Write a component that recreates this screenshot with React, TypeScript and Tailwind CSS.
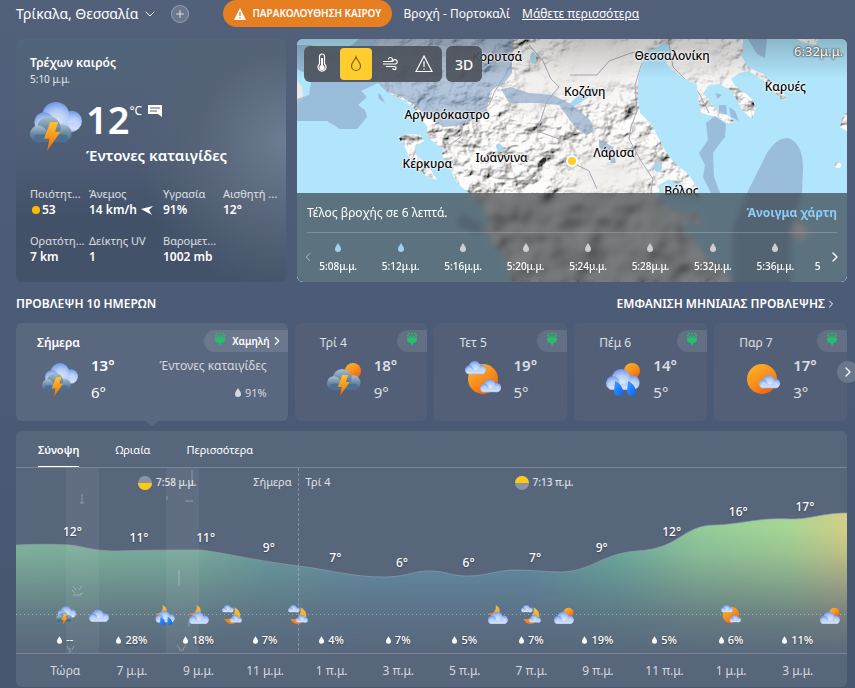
import React, { useState } from 'react';
import clsx from 'clsx';
import { ChevronDown, ChevronLeft, ChevronRight, Plus } from 'lucide-react';

type IconKind =
  | 'storm'
  | 'sunStorm'
  | 'sunClouds'
  | 'sunRain'
  | 'sunny'
  | 'cloud'
  | 'moonRain'
  | 'moonCloud'
  | 'moonClouds'
  | 'sunCloud';

const METRICS = [
  { label: 'Ποιότητ...', value: '53', dot: true },
  { label: 'Άνεμος', value: '14 km/h', arrow: true },
  { label: 'Υγρασία', value: '91%' },
  { label: 'Αισθητή ...', value: '12°' },
  { label: 'Ορατότη...', value: '7 km' },
  { label: 'Δείκτης UV', value: '1' },
  { label: 'Βαρομετ...', value: '1002 mb' },
];

const PLACES = [
  { name: 'Κορυτσά', x: 36.4, y: 7.4 },
  { name: 'Θεσσαλονίκη', x: 68.2, y: 7 },
  { name: 'Κοζάνη', x: 52.3, y: 21.8 },
  { name: 'Καρυές', x: 88.8, y: 19.8 },
  { name: 'Αργυρόκαστρο', x: 27.3, y: 31.3 },
  { name: 'Κέρκυρα', x: 23.7, y: 51.3 },
  { name: 'Ιωάννινα', x: 37.2, y: 49 },
  { name: 'Λάρισα', x: 57.6, y: 46.9 },
  { name: 'Βόλος', x: 69.9, y: 62.6 },
];

const MINUTES = ['5:08', '5:12', '5:16', '5:20', '5:24', '5:28', '5:32', '5:36'];

const DAYS: { name: string; icon: IconKind; high: number; low: number }[] = [
  { name: 'Τρί 4', icon: 'sunStorm', high: 18, low: 9 },
  { name: 'Τετ 5', icon: 'sunClouds', high: 19, low: 5 },
  { name: 'Πέμ 6', icon: 'sunRain', high: 14, low: 5 },
  { name: 'Παρ 7', icon: 'sunny', high: 17, low: 3 },
];

// top = distance of the temperature label from the top of the graph area
const HOURS = [
  { time: 'Τώρα', temp: 12, top: 25, rain: '--' },
  { time: '7 μ.μ.', temp: 11, top: 31, rain: '28%' },
  { time: '9 μ.μ.', temp: 11, top: 31, rain: '18%' },
  { time: '11 μ.μ.', temp: 9, top: 41, rain: '7%' },
  { time: '1 π.μ.', temp: 7, top: 51, rain: '4%' },
  { time: '3 π.μ.', temp: 6, top: 56, rain: '7%' },
  { time: '5 π.μ.', temp: 6, top: 56, rain: '5%' },
  { time: '7 π.μ.', temp: 7, top: 51, rain: '7%' },
  { time: '9 π.μ.', temp: 9, top: 41, rain: '19%' },
  { time: '11 π.μ.', temp: 12, top: 25, rain: '5%' },
  { time: '1 μ.μ.', temp: 16, top: 5, rain: '6%' },
  { time: '3 μ.μ.', temp: 17, top: 0, rain: '11%' },
];

// one slot per hour, null where the condition does not change
const SLOTS: (IconKind | null)[] = [
  'storm', 'cloud', null, 'moonRain', 'moonCloud', 'moonClouds', null, 'moonClouds',
  null, null, null, null, null, 'moonCloud', 'moonClouds', 'sunCloud',
  null, null, null, null, 'sunClouds', null, null, 'sunCloud',
];

// --- Weather glyphs ---
const Gradients = () => (
  <svg className="absolute" width="0" height="0" aria-hidden="true">
    <defs>
      <radialGradient id="puff" cx=".55" cy=".75" r=".75">
        <stop offset="0" stopColor="#dfebff" />
        <stop offset=".55" stopColor="#b4ccf7" />
        <stop offset="1" stopColor="#6f97e6" />
      </radialGradient>
      <linearGradient id="puffBase" x1="0" y1="0" x2="0" y2="1">
        <stop offset="0" stopColor="#b9cff8" />
        <stop offset=".7" stopColor="#d5e3fc" />
        <stop offset="1" stopColor="#9ab8ee" />
      </linearGradient>
      <linearGradient id="grayPuff" x1="0" y1="0" x2="0" y2="1">
        <stop offset="0" stopColor="#a9bfce" />
        <stop offset=".5" stopColor="#6b8aa4" />
        <stop offset="1" stopColor="#42678a" />
      </linearGradient>
      <linearGradient id="sun" x1=".15" y1="0" x2=".85" y2="1">
        <stop offset="0" stopColor="#f9b42c" />
        <stop offset=".5" stopColor="#f98e1c" />
        <stop offset="1" stopColor="#ee5b10" />
      </linearGradient>
      <linearGradient id="moon" x1=".8" y1="0" x2=".3" y2="1">
        <stop offset="0" stopColor="#f5bd45" />
        <stop offset=".6" stopColor="#f3a62c" />
        <stop offset="1" stopColor="#f07a12" />
      </linearGradient>
      <linearGradient id="bolt" x1="0" y1="0" x2="0" y2="1">
        <stop offset="0" stopColor="#ffc32b" />
        <stop offset="1" stopColor="#f06a0c" />
      </linearGradient>
      <linearGradient id="drop" x1="0" y1="0" x2="1" y2="1">
        <stop offset="0" stopColor="#3aa0ff" />
        <stop offset="1" stopColor="#0a62f5" />
      </linearGradient>
    </defs>
  </svg>
);

const Cloud = ({ x, y, s, gray = false }: { x: number; y: number; s: number; gray?: boolean }) => {
  const puff = gray ? 'url(#grayPuff)' : 'url(#puff)';
  const base = gray ? '#4b7092' : 'url(#puffBase)';
  return (
    <g transform={`translate(${x} ${y}) scale(${s})`}>
      <circle cx="25" cy="13" r="7" fill={puff} />
      <circle cx="14.500" cy="9" r="9" fill={puff} />
      <circle cx="6.500" cy="13.500" r="6.500" fill={puff} />
      <rect x="3" y="14" width="26" height="6" rx="3" fill={base} />
    </g>
  );
};

const Sun = ({ cx, cy, r }: { cx: number; cy: number; r: number }) => (
  <circle cx={cx} cy={cy} r={r} fill="url(#sun)" />
);

const Moon = ({ x, y, s }: { x: number; y: number; s: number }) => (
  <path
    transform={`translate(${x} ${y}) scale(${s})`}
    d="M16 0C22 3 26 8 25 15C24 23 16 27 9 26C5 25 2 22 0 18C6 20 12 18 14 13C16 9 17 5 16 0Z"
    fill="url(#moon)"
  />
);

const Bolt = ({ x, y, s }: { x: number; y: number; s: number }) => (
  <path
    transform={`translate(${x} ${y}) scale(${s})`}
    d="M5.500 0H10.500L8.500 6H12L3.500 18L5 10.500H1.500Z"
    fill="url(#bolt)"
  />
);

const Drop = ({ x, y }: { x: number; y: number }) => (
  <path
    transform={`translate(${x} ${y})`}
    d="M1 0C5 2 9 6 9 10.500A4.500 4.500 0 0 1 0 10.500C0 7 1 4 1 0Z"
    fill="url(#drop)"
  />
);

const WeatherIcon = ({ kind, className }: { kind: IconKind; className?: string }) => (
  <svg viewBox="0 0 36 36" className={className} aria-hidden="true">
    {kind === 'storm' && (
      <>
        <Cloud x={3} y={2} s={1.03} />
        <Cloud x={0} y={12} s={0.9} gray />
        <Bolt x={8} y={16} s={1.1} />
      </>
    )}
    {kind === 'sunStorm' && (
      <>
        <Sun cx={27} cy={10} r={8} />
        <Cloud x={1} y={8} s={1.05} gray />
        <Bolt x={10} y={14} s={1.15} />
      </>
    )}
    {kind === 'sunClouds' && (
      <>
        <Sun cx={18} cy={18} r={15} />
        <Cloud x={0} y={0} s={0.66} />
        <Cloud x={15} y={18} s={0.66} />
      </>
    )}
    {kind === 'sunRain' && (
      <>
        <Sun cx={27} cy={10} r={8} />
        <Cloud x={1} y={8} s={1.05} />
        <Drop x={9} y={20} />
        <Drop x={22} y={20} />
      </>
    )}
    {kind === 'sunny' && (
      <>
        <Sun cx={17} cy={18} r={15} />
        <Cloud x={14} y={14} s={0.66} />
      </>
    )}
    {kind === 'cloud' && <Cloud x={0} y={8} s={1.12} />}
    {kind === 'moonRain' && (
      <>
        <Moon x={1} y={0} s={0.8} />
        <Cloud x={1} y={10} s={1.08} />
        <Drop x={9} y={21} />
        <Drop x={22} y={21} />
      </>
    )}
    {kind === 'moonCloud' && (
      <>
        <Moon x={1} y={0} s={0.8} />
        <Cloud x={0} y={12} s={1.12} />
      </>
    )}
    {kind === 'moonClouds' && (
      <>
        <Moon x={4} y={4} s={1.15} />
        <Cloud x={0} y={0} s={0.66} />
        <Cloud x={14} y={18} s={0.68} />
      </>
    )}
    {kind === 'sunCloud' && (
      <>
        <Sun cx={26} cy={14} r={9} />
        <Cloud x={0} y={12} s={1.12} />
      </>
    )}
  </svg>
);

const RainDrop = ({ className }: { className?: string }) => (
  <svg viewBox="0 0 6 9" className={className} fill="currentColor" aria-hidden="true">
    <path d="M3 0C4 2 6 4 6 6A3 3 0 0 1 0 6C0 4 2 2 3 0Z" />
  </svg>
);

const Pollen = () => (
  <svg viewBox="0 0 12 14" className="-mt-1 h-[14px] w-3 shrink-0" fill="#25c06d" aria-hidden="true">
    <path d="M1 6C3 5 9 5 11 6C11.500 9 9.500 10.500 7.500 10.800L6 14L4.500 10.800C2.500 10.500 .5 9 1 6Z" />
    <circle cx="1.800" cy="3.800" r="1" />
    <circle cx="10.200" cy="3.800" r="1" />
    <circle cx="4.500" cy="4.300" r="1" />
    <circle cx="7.500" cy="4.300" r="1" />
    <circle cx="3" cy="1.500" r=".9" />
    <circle cx="6" cy="1.500" r=".9" />
    <circle cx="9" cy="1.500" r=".9" />
  </svg>
);

// --- Terrain under the radar layer ---
const MapCanvas = () => (
  <svg
    viewBox="0 0 550 243"
    preserveAspectRatio="xMidYMid slice"
    className="absolute inset-0 h-full w-full"
    aria-hidden="true"
  >
    <defs>
      <filter id="relief" x="0" y="0" width="100%" height="100%">
        <feTurbulence type="fractalNoise" baseFrequency=".04 .05" numOctaves="5" seed="8" result="n" />
        <feDiffuseLighting in="n" surfaceScale="11" diffuseConstant="1.25" lightingColor="#f7f6f4" result="l">
          <feDistantLight azimuth="225" elevation="52" />
        </feDiffuseLighting>
        <feComposite in="l" in2="SourceGraphic" operator="in" />
      </filter>
      <filter id="soft">
        <feGaussianBlur stdDeviation="14" />
      </filter>
      <mask id="flats">
        <rect width="550" height="243" fill="#ddd" />
        <g fill="#000" filter="url(#soft)">
          <ellipse cx="300" cy="22" rx="46" ry="40" />
          <ellipse cx="395" cy="22" rx="56" ry="24" />
          <ellipse cx="310" cy="136" rx="46" ry="26" />
          <ellipse cx="240" cy="50" rx="30" ry="26" />
          <ellipse cx="86" cy="12" rx="22" ry="20" />
        </g>
      </mask>
      <clipPath id="land">
        <path d="M76 0L80 14L79 30L84 46L92 54L103 59L116 68L124 80L131 88L129 95L134 101L146 110L145 116L154 131L160 144L172 154L186 168L192 182L188 192L198 205L210 222L216 243H436L424 226L408 218L398 202L384 190L394 183L406 190L400 172L388 176L372 170L362 160L362 146L372 140L384 148L401 153L396 142L390 134L380 126L373 119L366 108L355 86L343 74L341 60L341 40L345 24L350 16L353 11L360 9L366 4L372 6L373 14L369 24L376 32L388 40L400 46L401 58L404 74L420 78L430 84L438 83L430 76L418 69L411 60L406 54L412 46L423 45L433 51L440 61L445 71L455 80L459 69L455 60L448 54L438 47L434 40L442 34L452 32L458 36L470 44L476 52L484 60L490 59L480 48L466 35L457 31L451 28L445 18L446 0Z" />
        <path d="M101 98L112 95L123 96L127 102L118 108L119 116L126 122L136 134L140 141L128 136L113 121L108 108Z" />
        <path d="M500 0H521L518 6L508 4Z" />
        <path d="M545 78L550 73V92L543 88Z" />
        <ellipse cx="541" cy="126" rx="3" ry="3" />
        <ellipse cx="502" cy="192" rx="8" ry="10" />
      </clipPath>
    </defs>

    <rect width="550" height="243" fill="#b0e5fc" />
    <path d="M0 41L5 48L6 60L0 66Z" fill="#ece9e6" />
    <g clipPath="url(#land)">
      <rect width="550" height="243" fill="#f0efed" />
      <g mask="url(#flats)">
        <rect width="550" height="243" filter="url(#relief)" />
      </g>
      <g fill="none" stroke="#aaa4b8" strokeWidth="1">
        <path d="M216 0L214 26L206 40L198 52L192 66L176 74L166 84L164 98L152 106" />
        <path d="M232 6L246 22L254 40L262 48L250 62L244 80L240 92L262 100" />
        <path d="M273 36L300 36L312 22L334 14L346 12M345 24L338 46L340 72L334 88L332 100L344 122L356 140L354 152" />
        <path d="M371 0L376 28L390 42L402 54L412 74M276 124L292 132L300 150" />
      </g>
      <g fill="#a5d8ee">
        <ellipse cx="236" cy="19" rx="3" ry="6" />
        <path d="M273 64L284 54L297 48L300 53L287 61L276 68Z" />
        <ellipse cx="203" cy="109" rx="3" ry="5" transform="rotate(-40 203 109)" />
        <ellipse cx="361" cy="128" rx="4" ry="5" />
      </g>
    </g>

    {/* rain echoes */}
    <g fill="#8da9ca" fillOpacity=".66">
      <path d="M0 82H30L43 90H60L70 78L68 71L61 66L70 58L64 52L81 44L90 53L103 57L116 65L128 76L146 88L160 87L176 81L190 70L193 54L198 48L206 46L215 34L215 14L216 0H62L50 10L30 14L14 6H0V30L8 34L14 44L12 56L0 60Z" />
      <path d="M204 50L214 48L232 54L256 56L272 64L283 72L294 82L297 92L290 96L280 90L272 80L262 66L240 64L212 64Z" />
      <path d="M302 100L316 108L319 124L314 124L310 114L302 108Z" />
      <path d="M409 84L418 77L429 85L428 98L420 108L416 114L417 138L423 154L414 154L406 138L408 126L402 114L411 101Z" />
      <path d="M422 66L429 66L430 76L422 74ZM432 68L438 72L442 82L434 78ZM419 54L425 56L420 60Z" />
      <path d="M451 0H470L468 19L460 15Z" />
      <path d="M436 243V190L448 158L470 114Q480 98 491 99Q506 104 506 130L505 154L494 190V243Z" />
      <path d="M164 174L186 186L184 196L160 186Z" />
      <path d="M81 54L84 56L88 64L82 60Z" />
    </g>
  </svg>
);

const TOOLS = [
  {
    label: 'Θερμοκρασία',
    art: (
      <>
        <path d="M9.500 12V4.500a2.500 2.500 0 0 1 5 0V12a4 4 0 1 1-5 0Z" />
        <circle cx="12" cy="15.500" r="2" fill="currentColor" />
        <path d="M12 6v9" strokeWidth="2" />
      </>
    ),
  },
  { label: 'Υετός', art: <path d="M12 5c1 3 4.500 5.500 4.500 9a4.500 4.500 0 0 1-9 0C7.500 10.500 11 8 12 5Z" /> },
  {
    label: 'Άνεμος',
    art: (
      <path d="M5 9.500h7.500a2 2 0 1 0-2-2M5 12h12a2.200 2.200 0 1 0-2.200-2.200M8 14.500h8.500a1.600 1.600 0 1 1-1.600 1.600" />
    ),
  },
  { label: 'Προειδοποιήσεις', art: <path d="M12 4L20 19.500H4ZM12 9v6M12 16.500v1.300" /> },
];

const RadarMap = () => {
  const [layer, setLayer] = useState(1);

  return (
    <section className="relative flex min-h-[243px] flex-col justify-between overflow-hidden rounded-md bg-[#b0e5fc]">
      <MapCanvas />
      <div className="absolute inset-x-0 top-0 h-10 bg-gradient-to-b from-black/20 to-transparent" />
      {PLACES.map((p) => (
        <span
          key={p.name}
          style={{ left: `${p.x}%`, top: `${p.y}%` }}
          className="absolute -translate-x-1/2 -translate-y-1/2 text-[12px] leading-4 font-medium text-black [text-shadow:0_0_2px_#fff,0_0_2px_#fff,0_0_3px_#fff]"
        >
          {p.name}
        </span>
      ))}
      <span className="absolute top-[50%] left-[50%] size-3 -translate-x-1/2 -translate-y-1/2 rounded-full border-[2px] border-white bg-[#ffcc29] shadow" />
      <span className="absolute top-1 right-1 text-[13px] leading-4 font-medium text-[#f2f2f2] [text-shadow:0_0_2px_#444,0_0_2px_#444,0_0_1px_#444]">
        6:32μ.μ.
      </span>

      <div className="relative flex gap-1 p-[7px]">
        <div className="flex gap-[2px] rounded-md bg-[#4b5159]/90 p-[2px]">
          {TOOLS.map((tool, i) => (
            <button
              key={tool.label}
              type="button"
              aria-label={tool.label}
              onClick={() => setLayer(i)}
              className={clsx(
                'flex size-8 items-center justify-center rounded-[4px]',
                layer === i ? 'bg-[#ffce2e] text-[#7a6114]' : 'text-white',
              )}
            >
              <svg viewBox="0 0 24 24" className="size-6" fill="none" stroke="currentColor" strokeWidth="1.200">
                {tool.art}
              </svg>
            </button>
          ))}
        </div>
        <button type="button" className="size-9 rounded-md bg-[#4b5159]/90 text-[14px] font-medium text-white">
          3D
        </button>
      </div>

      <div className="relative h-[89px] bg-[#24272c]/60 px-[10px] text-white backdrop-blur-[3px]">
        <div className="flex h-10 items-center justify-between border-b border-white/20 text-[12px]">
          <span>Τέλος βροχής σε 6 λεπτά.</span>
          <a href="#map" className="font-bold text-[#8fcbf3]">
            Άνοιγμα χάρτη
          </a>
        </div>
        <div className="-mx-[6px] flex items-center pt-[6px]">
          <button type="button" aria-label="Προηγούμενο" className="text-white/60">
            <ChevronLeft size={14} strokeWidth={1.5} />
          </button>
          <ol className="flex min-w-0 flex-1 overflow-hidden">
            {MINUTES.map((m, i) => (
              <li key={m} className="flex w-[12.2%] shrink-0 flex-col items-center gap-[6px] pt-1 pr-4 text-[10px] leading-4 font-medium">
                <RainDrop className={clsx('h-[9px] w-[6px]', i < 2 ? 'text-[#9bd2f2]' : 'text-[#cfcfcf]')} />
                {m}μ.μ.
              </li>
            ))}
            <li className="flex flex-1 items-end text-[10px] leading-4 font-medium">5</li>
          </ol>
          <button type="button" aria-label="Επόμενο">
            <ChevronRight size={16} strokeWidth={2} />
          </button>
        </div>
      </div>
    </section>
  );
};

const CurrentWeather = () => (
  <section className="rounded-md bg-[radial-gradient(circle_at_100%_42%,#6d7c92_0%,#566378_28%,transparent_50%),linear-gradient(180deg,#52657a_0%,#4f5e76_45%,#425168_75%,#435269_100%)] px-[14px] pt-4 text-white">
    <h2 className="text-[12px] leading-4 font-semibold">Τρέχων καιρός</h2>
    <p className="text-[10px] leading-4 text-white/85">5:10 μ.μ.</p>
    <div className="mt-4 flex gap-1">
      <WeatherIcon kind="storm" className="-mt-1 h-[52px] w-[52px] shrink-0" />
      <div>
        <div className="flex items-start">
          <span className="text-[38px] leading-8 font-semibold">12</span>
          <span className="text-[12px] leading-4">°C</span>
          <button type="button" aria-label="Σχόλια" className="ml-[6px] pt-[2px]">
            <svg viewBox="0 0 14 12" className="h-3 w-[14px]" aria-hidden="true">
              <path d="M0 0H14V12L10 9H0Z" fill="#fff" />
              <path d="M2 3H12M2 6H9" stroke="#4f5e76" />
            </svg>
          </button>
        </div>
        <p className="mt-[10px] text-[15px] leading-5 font-semibold">Έντονες καταιγίδες</p>
      </div>
    </div>
    <dl className="mt-[21px] grid grid-cols-[59fr_74fr_60fr_49fr] gap-y-[15px]">
      {METRICS.map((m) => (
        <div key={m.label} className="min-w-0 whitespace-nowrap">
          <dt className="text-[11px] leading-4 text-white/80">{m.label}</dt>
          <dd className="flex items-center text-[12px] leading-4 font-semibold">
            {m.dot && <span className="mr-[2px] ml-[2px] size-2 rounded-full bg-[#ffb900]" />}
            {m.value}
            {m.arrow && (
              <svg viewBox="0 0 12 9" className="ml-1 h-[9px] w-3" aria-hidden="true">
                <path d="M0 3L12 0L8 4L11 9Z" fill="#fff" />
              </svg>
            )}
          </dd>
        </div>
      ))}
    </dl>
  </section>
);

const DayStrip = () => (
  <div className="relative grid grid-cols-[272fr_133fr_133fr_133fr_133fr] gap-[7px] text-white">
    <article className="relative h-[98px] rounded-md bg-[#5a687f]">
      <div className="flex items-center justify-between pt-[7px] pl-[21px]">
        <h3 className="pt-1 text-[12px] font-semibold">Σήμερα</h3>
        <a href="#pollen" className="flex h-[22px] items-center rounded-l-full bg-white/10 pr-1 pl-[10px] text-[10px] font-semibold">
          <Pollen />
          <span className="ml-[6px]">Χαμηλή</span>
          <ChevronRight size={14} strokeWidth={2} />
        </a>
      </div>
      <div className="flex items-center pr-[21px] pl-[26px]">
        <WeatherIcon kind="storm" className="size-9" />
        <div className="ml-[13px]">
          <p className="text-[15px] leading-[27px] font-semibold">13°</p>
          <p className="text-[15px] leading-[27px]">6°</p>
        </div>
        <div className="ml-auto flex flex-col items-end text-white/75">
          <p className="text-[12px] leading-[27px]">Έντονες καταιγίδες</p>
          <p className="flex items-center gap-1 text-[11px] leading-[27px]">
            <RainDrop className="h-[9px] w-[6px]" />
            91%
          </p>
        </div>
      </div>
      <span className="absolute top-full left-1/2 size-0 -translate-x-1/2 border-x-[6px] border-t-[6px] border-x-transparent border-t-[#5a687f]" />
    </article>

    {DAYS.map((d) => (
      <article key={d.name} className="h-[98px] rounded-md bg-[#525f77] text-white/80">
        <div className="flex items-center justify-between pt-[7px] pl-[25px]">
          <h3 className="pt-1 text-[12px]">{d.name}</h3>
          <span className="flex h-[22px] items-center rounded-l-full bg-white/10 px-[9px]">
            <Pollen />
          </span>
        </div>
        <div className="flex items-center pl-[31px]">
          <WeatherIcon kind={d.icon} className="size-9" />
          <div className="ml-3">
            <p className="text-[15px] leading-[27px] font-semibold">{d.high}°</p>
            <p className="text-[15px] leading-[27px]">{d.low}°</p>
          </div>
        </div>
      </article>
    ))}
    <button
      type="button"
      aria-label="Επόμενες ημέρες"
      className="absolute top-[38px] -right-3 flex size-[22px] items-center justify-center rounded-full bg-[#6a778c]"
    >
      <ChevronRight size={16} strokeWidth={2} />
    </button>
  </div>
);

const TABS = ['Σύνοψη', 'Ωριαία', 'Περισσότερα'];

const CURVE =
  'M0 77C20 76 40 76 54 77C70 79 78 83 100 83C130 82 160 82 184 82C205 84 230 91 282 98C310 101 335 109 367 109C392 109 396 103 414 103C430 103 434 108 451 108C472 108 480 102 500 102C515 102 530 104 544 104C575 104 585 86 620 83C665 81 665 57 700 57C722 56 735 52 754 51C770 50 775 52 790 50C808 47 815 45 831 45';

const HorizonSun = ({ set, time }: { set?: boolean; time: string }) => (
  <span className="flex items-center gap-1 text-[10px] font-medium">
    <svg viewBox="0 0 14 14" className="size-[14px]" aria-hidden="true">
      <circle cx="7" cy="7" r="7" fill="#8a94a5" />
      <path d={set ? 'M0 7H14A7 7 0 0 1 0 7Z' : 'M0 7A7 7 0 0 1 14 7Z'} fill="#fcca10" />
    </svg>
    {time}
  </span>
);

const HourlyPanel = () => {
  const [tab, setTab] = useState(0);

  return (
    <section className="mt-[10px] overflow-hidden rounded-md bg-[#58667c] text-white">
      <div role="tablist" className="flex h-[37px] gap-9 border-b border-white/20 px-[22px]">
        {TABS.map((t, i) => (
          <button
            key={t}
            type="button"
            role="tab"
            aria-selected={tab === i}
            onClick={() => setTab(i)}
            className={clsx('border-b pt-1 text-[11px]', tab === i ? 'border-white font-semibold' : 'border-transparent')}
          >
            {t}
          </button>
        ))}
      </div>

      <div className="relative h-[186px] border-b border-white/20">
        <svg viewBox="0 0 831 185" preserveAspectRatio="none" className="absolute inset-0 h-full w-full" aria-hidden="true">
          <defs>
            <linearGradient id="warmth" x1="0" y1="0" x2="1" y2="0">
              <stop offset="0" stopColor="#82b99d" />
              <stop offset=".22" stopColor="#7cb29e" />
              <stop offset=".3" stopColor="#6ba2a2" />
              <stop offset=".42" stopColor="#6594a8" />
              <stop offset=".62" stopColor="#6493a9" />
              <stop offset=".72" stopColor="#6cb0a1" />
              <stop offset=".82" stopColor="#92cb9b" />
              <stop offset=".93" stopColor="#a6d694" />
              <stop offset="1" stopColor="#d3ce87" />
            </linearGradient>
            <linearGradient id="fade" gradientUnits="userSpaceOnUse" x1="0" y1="60" x2="0" y2="185">
              <stop offset="0" stopColor="#fff" />
              <stop offset=".2" stopColor="#fff" stopOpacity=".85" />
              <stop offset=".75" stopColor="#fff" stopOpacity=".2" />
              <stop offset="1" stopColor="#fff" stopOpacity=".04" />
            </linearGradient>
            <mask id="fadeMask">
              <rect width="831" height="185" fill="url(#fade)" />
            </mask>
          </defs>
          <path d={`${CURVE}V185H0Z`} fill="url(#warmth)" mask="url(#fadeMask)" />
          <path d={CURVE} fill="none" stroke="#8f9aab" strokeOpacity=".7" />
          <g fill="#fff" fillOpacity=".05">
            <rect x="50" y="0" width="33" height="185" />
            <rect x="150" y="0" width="33" height="185" />
          </g>
          <g fill="none" stroke="#fff" strokeOpacity=".3">
            <path d="M66 26V35M64 35H68M56 122L59 125M57 118L60 122M66 118L63 122M67 125L64 126M57 127H65M163 102V118M176 2V18M151 28V32M169 33H177M173 153V159M54 180V185M51 178L53 182M58 178L56 182M161 177L164 181M170 177L167 181M163 182H168" />
          </g>
          <path d="M0 146.500H831" stroke="#fff" strokeOpacity=".4" strokeDasharray="1 3" />
          <path d="M282.500 0V185" stroke="#fff" strokeOpacity=".25" strokeDasharray="3 2" />
        </svg>

        <div className="relative flex h-[29px] items-center text-[11px] text-white/80">
          <div className="flex w-[34%] items-center justify-between pr-[7px] pl-[122px]">
            <HorizonSun set time="7:58 μ.μ." />
            Σήμερα
          </div>
          <div className="w-[26%] pl-[7px]">Τρί 4</div>
          <HorizonSun time="7:13 π.μ." />
        </div>

        <ul className="relative grid h-[107px] grid-cols-12 px-4">
          {HOURS.map((h) => (
            <li
              key={h.time}
              style={{ paddingTop: h.top }}
              className="pl-[31px] text-[12px] leading-5 font-medium [text-shadow:0_1px_2px_#0006]"
            >
              {h.temp}°
            </li>
          ))}
        </ul>

        <ul className="relative grid h-[22px] grid-cols-24 items-center pl-[33px]">
          {SLOTS.map((kind, i) => (
            <li key={i} className="flex justify-center">
              {kind && <WeatherIcon kind={kind} className="size-5 shrink-0" />}
            </li>
          ))}
        </ul>

        <ul className="relative grid grid-cols-12 px-4 pt-1 text-[11px] leading-5 font-medium [text-shadow:0_1px_2px_#0006]">
          {HOURS.map((h) => (
            <li key={h.time} className="flex items-center justify-center gap-1">
              <RainDrop className="h-2 w-[5px]" />
              {h.rain}
            </li>
          ))}
        </ul>
      </div>

      <ul className="grid h-[33px] grid-cols-12 items-center px-4 text-center text-[12px] text-white/75">
        {HOURS.map((h) => (
          <li key={h.time}>{h.time}</li>
        ))}
      </ul>
    </section>
  );
};

export default function App() {
  return (
    <div className="min-h-screen overflow-hidden bg-gradient-to-b from-[#52607a] via-[#4b5b75] to-[#475770] pr-2 pl-4 font-['Noto_Sans','Open_Sans',sans-serif]">
      <Gradients />
      <header className="flex h-[27px] items-center text-white">
        <button type="button" className="flex items-center gap-1 text-[14px]">
          Τρίκαλα, Θεσσαλία
          <ChevronDown size={16} strokeWidth={1.5} />
        </button>
        <button
          type="button"
          aria-label="Προσθήκη τοποθεσίας"
          className="ml-[13px] flex size-[18px] items-center justify-center rounded-full border border-white/30 bg-white/15"
        >
          <Plus size={12} strokeWidth={1.5} />
        </button>
        <button type="button" className="ml-[34px] flex h-[27px] items-center gap-[6px] rounded-full bg-[#e67e22] px-[11px] text-[10px] font-semibold">
          <svg viewBox="0 0 12 12" className="size-3" aria-hidden="true">
            <path d="M6 0L12 12H0Z" fill="#fff" />
            <path d="M6 4V8M6 9V10.500" stroke="#e67e22" strokeWidth="1.300" />
          </svg>
          ΠΑΡΑΚΟΛΟΥΘΗΣΗ ΚΑΙΡΟΥ
        </button>
        <p className="ml-[11px] text-[12px]">
          Βροχή - Πορτοκαλί
          <a href="#more" className="ml-3 underline">
            Μάθετε περισσότερα
          </a>
        </p>
      </header>

      <main>
        <div className="mt-3 grid grid-cols-[270fr_550fr] gap-[11px]">
          <CurrentWeather />
          <RadarMap />
        </div>
        <div className="flex h-[41px] items-center justify-between pt-[2px] text-[12px] font-semibold text-white">
          <h2>ΠΡΟΒΛΕΨΗ 10 ΗΜΕΡΩΝ</h2>
          <a href="#month" className="mr-[10px] flex items-center">
            ΕΜΦΑΝΙΣΗ ΜΗΝΙΑΙΑΣ ΠΡΟΒΛΕΨΗΣ
            <ChevronRight size={12} strokeWidth={2} />
          </a>
        </div>
        <DayStrip />
        <HourlyPanel />
      </main>
    </div>
  );
}
